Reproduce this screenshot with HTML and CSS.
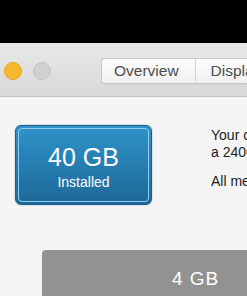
FILE: index.html
```html
<!DOCTYPE html>
<html>
<head>
<meta charset="utf-8">
<link rel="stylesheet" href="styles.css">
</head>
<body>
<div class="screen">
  <div class="blackbar"></div>
  <div class="toolbar">
    <div class="lights">
      <span class="light yellow"></span>
      <span class="light gray"></span>
    </div>
    <div class="tabs">
      <span class="tab">Overview</span>
      <span class="tab">Displays</span>
    </div>
  </div>
  <div class="content">
    <div class="row">
      <div class="memory-box">
        <div class="inner">
          <div class="size">40 GB</div>
          <div class="label">Installed</div>
        </div>
      </div>
      <div class="desc">
        <p class="line">Your computer has 40 GB of memory,</p>
        <p class="line">a 2400 MHz DDR4 configuration.</p>
        <p class="line gap">All memory slots are in use.</p>
      </div>
    </div>
    <div class="slot">4 GB</div>
  </div>
</div>
</body>
</html>
```
FILE: styles.css
```css
html, body {
  margin: 0;
  padding: 0;
  background: #000;
}
.screen {
  width: 247px;
  height: 296px;
  overflow: hidden;
  font-family: "Liberation Sans", Arial, sans-serif;
  background: #f5f5f5;
}
.blackbar {
  height: 43px;
  background: #000;
}
.toolbar {
  height: 53px;
  border-bottom: 1px solid #c4c4c4;
  background: linear-gradient(#e9e9e9, #d8d8d8);
  display: flex;
  align-items: center;
  white-space: nowrap;
}
.lights {
  display: flex;
  gap: 11px;
  padding-left: 4px;
  margin-top: 2px;
  flex-shrink: 0;
}
.light {
  width: 18px;
  height: 18px;
  border-radius: 50%;
  box-sizing: border-box;
}
.yellow {
  background: #f7b92b;
  border: 1px solid #e5a51c;
}
.gray {
  background: #d0d0d0;
  border: 1px solid #c2c2c2;
}
.tabs {
  display: flex;
  flex-shrink: 0;
  margin-left: 50px;
  margin-top: 2px;
  border: 1px solid #c9c9c9;
  border-right: none;
  border-radius: 4px 0 0 4px;
  background: linear-gradient(#fdfdfd, #f1f1f1);
  box-shadow: 0 1px 0 rgba(0,0,0,0.05);
}
.tab {
  height: 24px;
  line-height: 24px;
  font-size: 15.5px;
  color: #4e4e4e;
  padding: 0 16px 0 12px;
}
.tab + .tab {
  border-left: 1px solid #d4d4d4;
  padding-left: 15px;
}
.content {
  padding: 28px 0 0 15px;
}
.row {
  display: flex;
  white-space: nowrap;
}
.memory-box {
  flex-shrink: 0;
  width: 137px;
  height: 80px;
  box-sizing: border-box;
  border: 1px solid #1a6191;
  border-radius: 6px;
  background: linear-gradient(#2f93c9, #1d6898);
  padding: 2px;
  box-shadow: 0 0 2px rgba(20,80,120,0.4);
}
.inner {
  height: 100%;
  box-sizing: border-box;
  border: 1px solid #8fcbea;
  border-radius: 4px;
  display: flex;
  flex-direction: column;
  align-items: center;
  color: #fff;
}
.size {
  font-size: 25px;
  line-height: 28px;
  margin-top: 14px;
}
.label {
  font-size: 14px;
  line-height: 16px;
  margin-top: 3px;
}
.desc {
  flex-shrink: 0;
  margin-left: 59px;
  padding-top: 2px;
  font-size: 14px;
  color: #1e1e1e;
}
.line {
  margin: 0;
  line-height: 17px;
}
.gap {
  margin-top: 12px;
}
.slot {
  margin: 45px 0 0 27px;
  height: 60px;
  background: #929292;
  border-radius: 4px 0 0 0;
  color: #fff;
  font-size: 19px;
  letter-spacing: 1px;
  padding-top: 18px;
  box-sizing: border-box;
  padding-left: 130px;
  white-space: nowrap;
}
```
